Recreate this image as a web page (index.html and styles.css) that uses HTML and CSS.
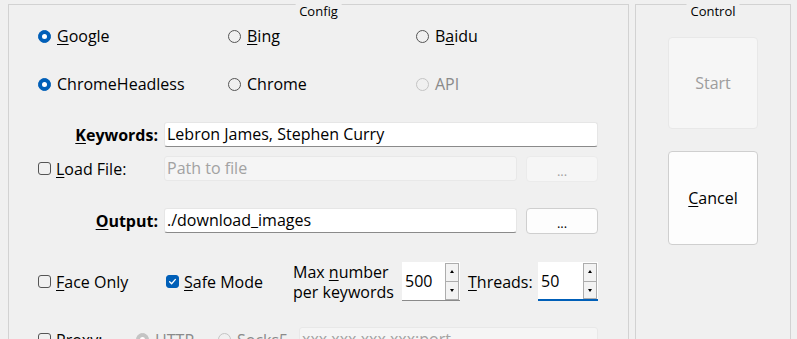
FILE: index.html
```html
<!DOCTYPE html>
<html>
<head>
<meta charset="utf-8">
<link rel="stylesheet" href="styles.css">
</head>
<body>
<div class="window">
  <section class="group config">
    <div class="group-title">Config</div>
    <div class="radio-grid">
      <div class="opt"><span class="radio checked"></span><span><u>G</u>oogle</span></div>
      <div class="opt"><span class="radio"></span><span><u>B</u>ing</span></div>
      <div class="opt"><span class="radio"></span><span>B<u>a</u>idu</span></div>
      <div class="opt"><span class="radio checked"></span><span>ChromeHeadless</span></div>
      <div class="opt"><span class="radio"></span><span>Chrome</span></div>
      <div class="opt disabled"><span class="radio"></span><span>API</span></div>
    </div>

    <div class="row row-keywords">
      <span class="lead label-right bold"><u>K</u>eywords:</span>
      <div class="input">Lebron James, Stephen Curry</div>
    </div>

    <div class="row row-load">
      <div class="lead opt"><span class="check"></span><span><u>L</u>oad File:</span></div>
      <div class="input disabled short">Path to file</div>
      <div class="btn btn-dots disabled">...</div>
    </div>

    <div class="row row-output">
      <span class="lead label-right bold"><u>O</u>utput:</span>
      <div class="input short">./download_images</div>
      <div class="btn btn-dots">...</div>
    </div>

    <div class="row row-options">
      <div class="opt face"><span class="check"></span><span><u>F</u>ace Only</span></div>
      <div class="opt safe"><span class="check checked"><svg viewBox="0 0 13 13" width="13" height="13"><path d="M3.6 6.8 L5.6 8.7 L9.4 4.4" fill="none" stroke="#fff" stroke-width="1.3" stroke-linecap="round" stroke-linejoin="round"/></svg></span><span><u>S</u>afe Mode</span></div>
      <div class="maxnum">Max <u>n</u>umber<br>per keywords</div>
      <div class="spin spin-max">
        <span class="spin-value">500</span>
        <span class="spin-btns"><span class="spin-btn up"></span><span class="spin-btn down"></span></span>
      </div>
      <span class="threads"><u>T</u>hreads:</span>
      <div class="spin spin-threads focus">
        <span class="spin-value">50</span>
        <span class="spin-btns"><span class="spin-btn up"></span><span class="spin-btn down"></span></span>
      </div>
    </div>

    <div class="row row-proxy">
      <div class="opt proxy"><span class="check"></span><span><u>P</u>roxy:</span></div>
      <div class="opt disabled http"><span class="radio checked"></span><span>HTTP</span></div>
      <div class="opt disabled socks"><span class="radio"></span><span>Socks5</span></div>
      <div class="input disabled proxy-input">xxx.xxx.xxx.xxx:port</div>
    </div>
  </section>

  <section class="group control">
    <div class="group-title">Control</div>
    <div class="big-btn disabled">Start</div>
    <div class="big-btn cancel"><span><u>C</u>ancel</span></div>
  </section>
</div>
</body>
</html>
```
FILE: styles.css
```css
html, body {
  margin: 0;
  padding: 0;
  background: #f0f0f0;
  overflow: hidden;
}
body {
  font-family: "Open Sans", "Noto Sans", sans-serif;
  font-size: 16px;
  color: #000;
}
u {
  text-decoration: underline;
  text-decoration-thickness: 1px;
  text-underline-offset: 2px;
}
.window {
  display: flex;
  gap: 6px;
  padding: 4px 6px 0 8px;
  height: 339px;
  box-sizing: border-box;
}
.group {
  position: relative;
  border: 1px solid #d2d2d2;
  height: 400px;
  box-sizing: border-box;
  flex: none;
}
.group-title {
  position: absolute;
  top: -2px;
  left: 50%;
  transform: translateX(-50%);
  background: #f0f0f0;
  padding: 0 4px;
  font-size: 13px;
  line-height: 16px;
  white-space: nowrap;
}
.config {
  width: 621px;
  padding: 19px 30px 0 29px;
}
.control {
  width: 156px;
  padding: 32px 32px 0 32px;
}

/* radios & checks */
.opt {
  display: flex;
  align-items: center;
  line-height: 24px;
  white-space: nowrap;
}
.radio, .check {
  width: 13px;
  height: 13px;
  box-sizing: border-box;
  border: 1px solid #555;
  flex: none;
  position: relative;
}
.radio {
  border-radius: 50%;
  margin-right: 6px;
}
.radio.checked {
  background: #005fb8;
  border-color: #005fb8;
}
.radio.checked::after {
  content: "";
  position: absolute;
  left: 3px;
  top: 3px;
  width: 5px;
  height: 5px;
  border-radius: 50%;
  background: #fff;
}
.check {
  border-radius: 3px;
  margin-right: 5px;
}
.check.checked {
  background: #005fb8;
  border-color: #005fb8;
}
.check svg {
  position: absolute;
  left: -1px;
  top: -1px;
}
.opt.disabled {
  color: #8a8a8a;
}
.opt.disabled .radio {
  border-color: #c4c4c4;
}
.opt.disabled .radio.checked {
  background: #c4c4c4;
}

.radio-grid {
  display: grid;
  grid-template-columns: 190px 188px 1fr;
  grid-auto-rows: 24px;
  row-gap: 24px;
}

/* form rows */
.row {
  display: flex;
  align-items: center;
  height: 25px;
}
.lead {
  width: 120px;
  margin-right: 6px;
  flex: none;
}
.label-right {
  text-align: right;
}
.bold {
  font-weight: 700;
}
.row-keywords { margin-top: 26px; }
.row-load { margin-top: 9px; }
.row-output { margin-top: 27px; }
.row-options { margin-top: 29px; height: 39px; }
.row-proxy { margin-top: 26px; }

.input {
  height: 25px;
  box-sizing: border-box;
  background: #fff;
  border: 1px solid #e6e6e6;
  border-bottom-color: #8a8a8a;
  border-radius: 3px;
  padding-left: 2px;
  line-height: 23px;
  flex: 1;
  white-space: nowrap;
  overflow: hidden;
}
.input.short {
  flex: none;
  width: 353px;
}
.input.disabled {
  background: #f5f5f5;
  border-color: #e8e8e8;
  color: #a2a2a2;
}
.btn {
  box-sizing: border-box;
  border: 1px solid #cfcfcf;
  border-radius: 4px;
  background: #fdfdfd;
  text-align: center;
}
.btn-dots {
  width: 72px;
  height: 26px;
  margin-left: auto;
  font-size: 13px;
  line-height: 28px;
}
.btn.disabled {
  background: #f6f6f6;
  border-color: #ebebeb;
  color: #a2a2a2;
}

/* options row */
.face { width: 126px; flex: none; }
.safe { width: 127px; padding-left: 2px; flex: none; }
.maxnum {
  width: 109px;
  flex: none;
  line-height: 20px;
}
.spin {
  height: 39px;
  box-sizing: border-box;
  background: #fff;
  border-bottom: 1px solid #8a8a8a;
  display: flex;
  align-items: center;
  flex: none;
}
.spin-max { width: 58px; }
.spin-threads { width: 60px; }
.spin.focus { border-bottom: 2px solid #005fb8; }
.spin-value {
  flex: 1;
  padding-left: 3px;
}
.spin-btns {
  display: flex;
  flex-direction: column;
  width: 14px;
  margin-right: 1px;
  align-self: stretch;
  padding-top: 1px;
}
.spin.focus .spin-btns { padding-top: 1px; }
.spin-btn {
  flex: 1;
  box-sizing: border-box;
  border: 1px solid #adadad;
  background: #f3f3f3;
  position: relative;
}
.spin-btn.down { border-top: none; }
.spin-btn::after {
  content: "";
  position: absolute;
  left: 4px;
  top: 7px;
  border-left: 2.5px solid transparent;
  border-right: 2.5px solid transparent;
}
.spin-btn.up::after { border-bottom: 3px solid #000; top: 6px; }
.spin-btn.down::after { border-top: 3px solid #000; top: 7px; }
.threads {
  margin-left: 8px;
  width: 70px;
  flex: none;
}

/* proxy row */
.proxy { width: 98px; flex: none; }
.http { width: 82px; flex: none; }
.socks { width: 81px; flex: none; }
.proxy-input { flex: 1; }

/* control */
.big-btn {
  box-sizing: border-box;
  width: 90px;
  border: 1px solid #cfcfcf;
  border-radius: 4px;
  background: #fdfdfd;
  display: flex;
  align-items: center;
  justify-content: center;
}
.big-btn.disabled {
  height: 92px;
  background: #f6f6f6;
  border-color: #e8e8e8;
  color: #9d9d9d;
}
.big-btn.cancel {
  height: 94px;
  margin-top: 22px;
}
```
